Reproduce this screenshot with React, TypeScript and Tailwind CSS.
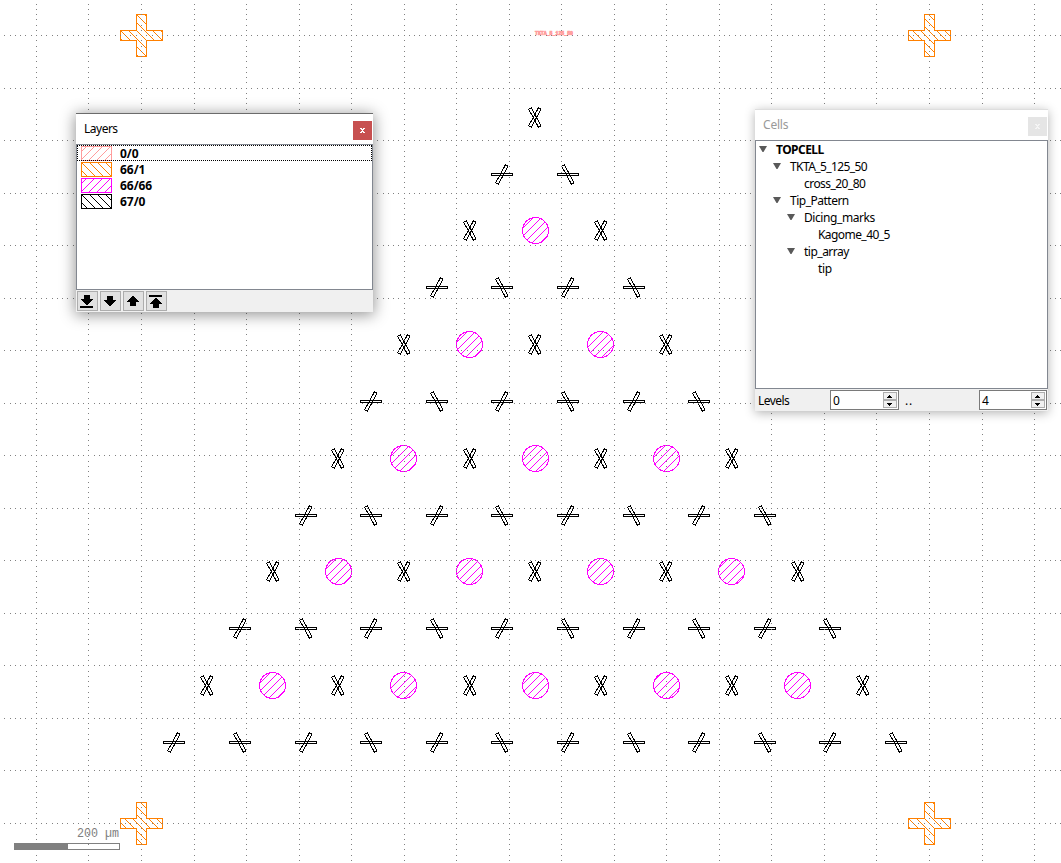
import React from 'react';

const STEP = 52.533;
const range = (n: number) => Array.from({ length: n }, (_, i) => i);

function gridPath() {
  let d = '';
  const dot = (x: number, y: number) => {
    d += `M${Math.round(x)} ${Math.round(y)}h1v1h-1z`;
  };
  for (let i = -2; i < 19; i++) {
    for (let k = -30; k < 180; k++) {
      dot(141 + STEP * i, 35.03 + (STEP / 10) * k);
      dot(141 + (STEP / 10) * k, 35.03 + STEP * (i - 1));
    }
  }
  return d;
}
const GRID = gridPath();

// Pixels of an 8px diagonal hatch that fall inside a shape.
function hatchPath(
  x0: number, y0: number, w: number, h: number,
  slope: 'up' | 'down', phase: number,
  inside: (x: number, y: number) => boolean = () => true,
) {
  let d = '';
  for (let y = y0; y < y0 + h; y++) {
    for (let x = x0; x < x0 + w; x++) {
      const s = slope === 'up' ? x + y : x - y + 8000;
      if (s % 8 === phase && inside(x, y)) d += `M${x} ${y}h1v1h-1z`;
    }
  }
  return d;
}

const BARS: Record<string, string> = {
  flat: 'M-11 -1h21v2h-21z',
  rise: 'M3 -9.8L5.6 -8.3L-4.2 9.8L-6.8 8.3Z',
  fall: 'M-4.2 -9.8L-6.8 -8.3L3 9.8L5.6 8.3Z',
};

function Tip({ x, y, kinds }: { x: number; y: number; kinds: string[] }) {
  return (
    <g transform={`translate(${x + 0.5} ${y + 0.5})`} fill="none" stroke="#000">
      {kinds.map((k) => <path key={k} d={BARS[k]} />)}
    </g>
  );
}

function Disc({ x, y }: { x: number; y: number }) {
  const hatch = hatchPath(x - 13, y - 13, 27, 27, 'up', 6, (a, b) => (a - x) ** 2 + (b - y) ** 2 < 166);
  return (
    <g>
      <path d={hatch} fill="#ff00ff" />
      <circle cx={x + 0.5} cy={y + 0.5} r="13" fill="none" stroke="#ff00ff" />
    </g>
  );
}

function Cross({ x, y }: { x: number; y: number }) {
  const hatch = hatchPath(x - 20, y - 20, 42, 42, 'down', 2, (a, b) =>
    (a > x - 5 && a < x + 6) || (b > y - 5 && b < y + 6));
  return (
    <g>
      <path d={hatch} fill="#ff8000" />
      <path
        d={`M${x - 4.5} ${y - 20.5}h10v16h16v10h-16v16h-10v-16h-16v-10h16z`}
        fill="none"
        stroke="#ff8000"
      />
    </g>
  );
}

function Layout() {
  return (
    <svg className="block" width="1061" height="863" viewBox="0 0 1061 863" shapeRendering="crispEdges">
      {[[141, 35], [929, 35], [141, 823], [929, 823]].map(([x, y]) => <Cross key={`${x}-${y}`} x={x} y={y} />)}
      {range(12).map((r) =>
        range(r + 1).map((j) => {
          const cx = 535.2 + (j * 2 - r) * 32.81;
          const x = Math.round(cx);
          const y = Math.round(116.85 + r * 56.81);
          const key = `${r}-${j}`;
          if (r % 2) return <Tip key={key} x={x} y={y} kinds={['flat', j % 2 ? 'fall' : 'rise']} />;
          if (j % 2) return <Disc key={key} x={Math.floor(cx - 0.1)} y={y} />;
          return <Tip key={key} x={x} y={y} kinds={['rise', 'fall']} />;
        }),
      )}
      <text x="535" y="35" fontSize="5.4" fontWeight="700" fill="#ff9d9d" stroke="#ff9d9d" strokeWidth="0.7" textLength="38" lengthAdjust="spacingAndGlyphs" fontFamily="Liberation Mono, monospace">TKTA_5_125_50</text>
      <rect x="14.5" y="843.5" width="105" height="6" fill="#fff" stroke="#808080" />
      <rect x="14" y="843" width="54" height="7" fill="#808080" />
      <path d={GRID} fill="#808080" />
      <text x="77" y="837" fontSize="12.5" fill="#808080" textLength="42" lengthAdjust="spacingAndGlyphs" fontFamily="Liberation Mono, monospace">200 µm</text>
    </svg>
  );
}

function CloseMark() {
  return (
    <svg width="5" height="5" viewBox="0 0 5 5" shapeRendering="crispEdges" fill="currentColor">
      <path d="M0 0h2v1h1v-1h2v1h-1v1h-1v1h1v1h1v1h-2v-1h-1v1h-2v-1h1v-1h1v-1h-1v-1h-1z" />
    </svg>
  );
}

const layers: { name: string; color: string; slope: 'up' | 'down' }[] = [
  { name: '0/0', color: '#ff9d9d', slope: 'up' },
  { name: '66/1', color: '#ff8000', slope: 'down' },
  { name: '66/66', color: '#ff00ff', slope: 'up' },
  { name: '67/0', color: '#000000', slope: 'down' },
];

const DOWN = 'M4 0h6v4h3v1h-1v1h-1v1h-1v1h-1v1h-1v1h-2v-1h-1v-1h-1v-1h-1v-1h-1v-1h-1v-1h3z';
const UP = 'M4 10h6v-4h3v-1h-1v-1h-1v-1h-1v-1h-1v-1h-1v-1h-2v1h-1v1h-1v1h-1v1h-1v1h-1v1h3z';
const tools = [
  <><path d={DOWN} /><path d="M0 11h13v2h-13z" /></>,
  <path d={DOWN} transform="translate(0 1)" />,
  <path d={UP} transform="translate(0 1)" />,
  <><path d="M0 0h13v2h-13z" /><path d={UP} transform="translate(0 3)" /></>,
];

function LayersWindow() {
  return (
    <section className="absolute left-[76px] top-[113px] flex h-[199px] w-[297px] flex-col border-t border-[#6b6b6b] bg-[#f0f0f0] shadow-[0_2px_14px_1px_rgba(0,0,0,0.42)]">
      <header className="flex h-[30px] items-center justify-between bg-white pl-2 pr-px">
        <span className="text-[12px] leading-[30px] tracking-[-0.5px]">Layers</span>
        <button className="mt-[3px] flex h-[19px] w-[19px] items-center justify-center bg-[#c75050] text-white"><CloseMark /></button>
      </header>
      <ul className="h-[146px] border border-[#828790] bg-white">
        {layers.map((l, i) => (
          <li key={l.name} className={`flex h-4 items-start gap-2 pl-1 pt-px ${i === 0 ? 'outline-dotted outline-1 -outline-offset-1 outline-black' : ''}`}>
            <svg width="31" height="15" shapeRendering="crispEdges">
              <path d={hatchPath(1, 1, 29, 13, l.slope, l.slope === 'up' ? 5 : 0)} fill={l.color} />
              <rect x="0.5" y="0.5" width="30" height="14" fill="none" stroke={l.color} />
            </svg>
            <span className="text-[12px] font-bold leading-4 tracking-[-0.05px]">{l.name}</span>
          </li>
        ))}
      </ul>
      <footer className="flex gap-[2px] pl-px pt-px">
        {tools.map((t, i) => (
          <button key={i} className="flex h-5 w-[21px] items-center border border-[#adadad] bg-[#e1e1e1] pl-[2px]">
            <svg width="13" height="13" shapeRendering="crispEdges">{t}</svg>
          </button>
        ))}
      </footer>
    </section>
  );
}

const cells = [
  { name: 'TOPCELL', indent: 'pl-[3px]', open: true, style: 'font-bold tracking-[-0.55px]' },
  { name: 'TKTA_5_125_50', indent: 'pl-[17px]', open: true, style: 'tracking-[-0.6px]' },
  { name: 'cross_20_80', indent: 'pl-[31px]', open: false, style: 'tracking-[-0.55px]' },
  { name: 'Tip_Pattern', indent: 'pl-[17px]', open: true, style: 'tracking-[-0.5px]' },
  { name: 'Dicing_marks', indent: 'pl-[31px]', open: true, style: 'tracking-[-0.42px]' },
  { name: 'Kagome_40_5', indent: 'pl-[45px]', open: false, style: 'tracking-[-0.57px]' },
  { name: 'tip_array', indent: 'pl-[31px]', open: true, style: 'tracking-[-0.5px]' },
  { name: 'tip', indent: 'pl-[45px]', open: false, style: 'tracking-[-0.3px]' },
];

function SpinBox({ value, width }: { value: string; width: string }) {
  return (
    <div className={`flex h-5 justify-between border border-[#7a7a7a] bg-white pl-[2px] ${width}`}>
      <span className="pt-px text-[12px] leading-[18px] tracking-[-0.5px]">{value}</span>
      <div className="flex flex-col py-px pr-px">
        {['M2 0h1v1h1v1h1v1h-5v-1h1v-1h1z', 'M0 0h5v1h-1v1h-1v1h-1v-1h-1v-1h-1z'].map((d) => (
          <span key={d} className="flex h-2 w-[14px] items-center border border-[#adadad] bg-[#f0f0f0] pl-[3px]">
            <svg width="5" height="3" shapeRendering="crispEdges"><path d={d} /></svg>
          </span>
        ))}
      </div>
    </div>
  );
}

function CellsWindow() {
  return (
    <section className="absolute left-[755px] top-[109px] flex h-[302px] w-[293px] flex-col border-t border-[#dedede] bg-[#f0f0f0] shadow-[0_2px_10px_0_rgba(0,0,0,0.3)]">
      <header className="flex h-[30px] items-center justify-between bg-white pl-2 pr-px">
        <span className="text-[12px] leading-[30px] tracking-[-0.2px] text-[#999]">Cells</span>
        <button className="mt-[3px] flex h-[19px] w-[19px] items-center justify-center bg-[#e5e5e5] text-[#f5f5f5]"><CloseMark /></button>
      </header>
      <ul className="h-[249px] border border-[#828790] bg-white">
        {cells.map((c) => (
          <li key={c.name} className={`flex h-[17px] items-center ${c.indent}`}>
            <span className="w-[17px]">
              {c.open && <svg className="-mt-px block" width="8" height="6"><path d="M0 0H8L4.5 6H3.5Z" fill="#595959" /></svg>}
            </span>
            <span className={`text-[12px] leading-[17px] ${c.style}`}>{c.name}</span>
          </li>
        ))}
      </ul>
      <footer className="flex h-[22px] items-center pl-[3px]">
        <span className="w-[72px] pt-px text-[12px] tracking-[-0.55px]">Levels</span>
        <SpinBox value="0" width="w-[69px]" />
        <span className="w-20 pl-1.5 pt-px text-[12px] tracking-[0.8px]">..</span>
        <SpinBox value="4" width="w-[68px]" />
      </footer>
    </section>
  );
}

export default function App() {
  return (
    <main className="relative h-[863px] w-[1061px] overflow-hidden bg-white font-['Noto_Sans',sans-serif] text-black">
      <Layout />
      <LayersWindow />
      <CellsWindow />
    </main>
  );
}
